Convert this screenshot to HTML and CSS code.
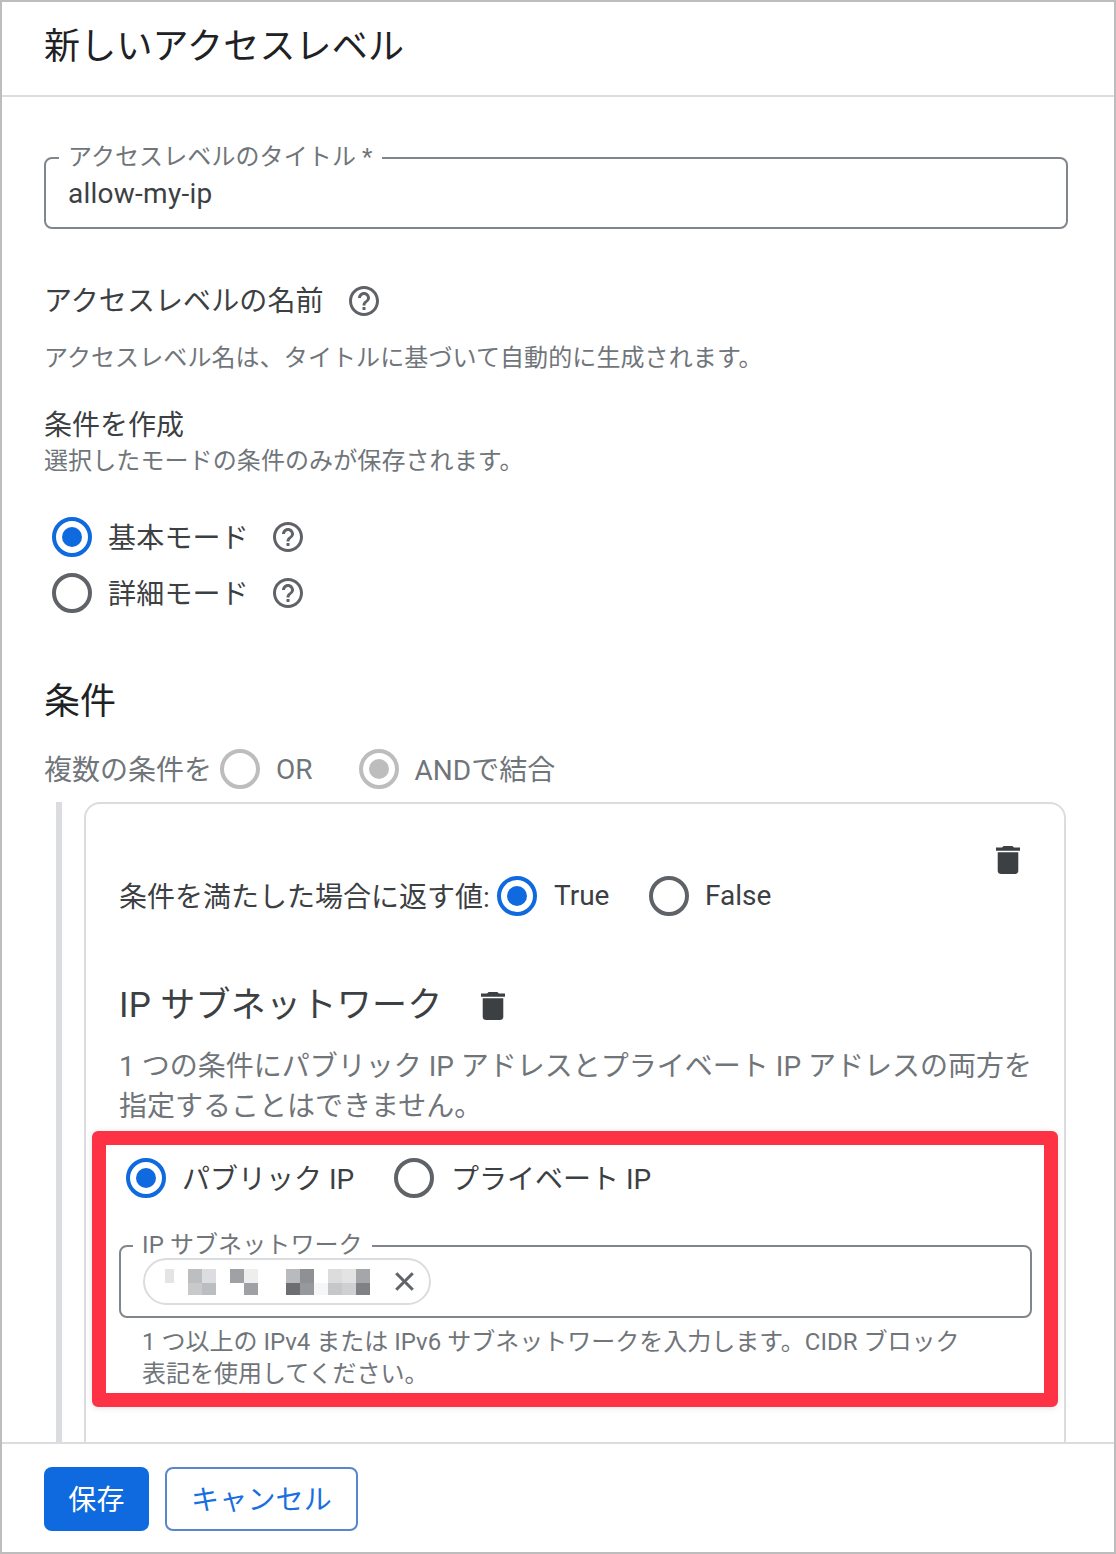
FILE: index.html
```html
<!DOCTYPE html>
<html lang="ja">
<head>
<meta charset="utf-8">
<title>新しいアクセスレベル</title>
<link rel="stylesheet" href="styles.css">
</head>
<body>
<svg class="defs" width="0" height="0" aria-hidden="true">
  <symbol id="help" viewBox="0 0 24 24"><path d="M11 18h2v-2h-2v2zm1-16C6.48 2 2 6.48 2 12s4.48 10 10 10 10-4.48 10-10S17.52 2 12 2zm0 18c-4.41 0-8-3.59-8-8s3.59-8 8-8 8 3.59 8 8-3.59 8-8 8zm0-14c-2.21 0-4 1.79-4 4h2c0-1.1.9-2 2-2s2 .9 2 2c0 2-3 1.75-3 5h2c0-2.25 3-2.5 3-5 0-2.21-1.79-4-4-4z"/></symbol>
  <symbol id="trash" viewBox="5 3 14 18" preserveAspectRatio="none"><path d="M6 19c0 1.1.9 2 2 2h8c1.1 0 2-.9 2-2V7H6v12zM19 4h-3.5l-1-1h-5l-1 1H5v2h14V4z"/></symbol>
</svg>
<div class="page">
  <header class="top"><h1 class="title">新しいアクセスレベル</h1></header>
  <main class="content">
    <fieldset class="field title-field">
      <legend class="legend">アクセスレベルのタイトル *</legend>
      <div class="value">allow-my-ip</div>
    </fieldset>

    <div class="name-row"><span class="name-label">アクセスレベルの名前</span><svg class="help help-name"><use href="#help"/></svg></div>
    <p class="muted name-desc">アクセスレベル名は、タイトルに基づいて自動的に生成されます。</p>

    <div class="create-title">条件を作成</div>
    <p class="muted create-desc">選択したモードの条件のみが保存されます。</p>

    <div class="modes">
      <div class="mode"><span class="radio on"></span><span class="mode-label">基本モード</span><svg class="help"><use href="#help"/></svg></div>
      <div class="mode"><span class="radio"></span><span class="mode-label">詳細モード</span><svg class="help"><use href="#help"/></svg></div>
    </div>

    <h2 class="section-title">条件</h2>
    <div class="combine">
      <span class="combine-label">複数の条件を</span>
      <span class="radio disabled combine-or"></span><span class="combine-text">OR</span>
      <span class="radio disabled on combine-and"></span><span class="combine-text combine-text-and">ANDで結合</span>
    </div>

    <section class="group">
      <div class="card">
        <div class="card-actions"><svg class="trash"><use href="#trash"/></svg></div>
        <div class="return-row">
          <span class="return-label">条件を満たした場合に返す値:</span>
          <span class="radio on"></span><span class="return-true">True</span>
          <span class="radio return-radio"></span><span class="return-false">False</span>
        </div>
        <div class="subnet-head"><h3 class="subnet-title">IP サブネットワーク</h3><svg class="trash subnet-trash"><use href="#trash"/></svg></div>
        <p class="subnet-desc">1 つの条件にパブリック IP アドレスとプライベート IP アドレスの両方を指定することはできません。</p>

        <div class="highlight">
          <div class="ip-types">
            <span class="radio on"></span><span class="ip-public">パブリック IP</span>
            <span class="radio"></span><span class="ip-private">プライベート IP</span>
          </div>
          <fieldset class="field subnet-field">
            <legend class="legend">IP サブネットワーク</legend>
            <div class="chip">
              <svg class="mosaic" width="205" height="26" viewBox="0 0 205 26" shape-rendering="crispEdges" aria-hidden="true">
                <rect x="0" y="0" width="9" height="14" fill="#e4e4e5"/>
                <rect x="23" y="0" width="14" height="14" fill="#bdbec0"/><rect x="23" y="14" width="14" height="12" fill="#c8c9cb"/>
                <rect x="37" y="0" width="14" height="14" fill="#dcdde0"/><rect x="37" y="14" width="14" height="12" fill="#bcbdc0"/>
                <rect x="65" y="0" width="14" height="14" fill="#a0a1a4"/>
                <rect x="79" y="0" width="14" height="14" fill="#eeeeef"/><rect x="79" y="14" width="14" height="12" fill="#9fa0a3"/>
                <rect x="121" y="0" width="14" height="14" fill="#b9babd"/><rect x="121" y="14" width="14" height="12" fill="#6c6e73"/>
                <rect x="135" y="0" width="14" height="14" fill="#8f9094"/><rect x="135" y="14" width="14" height="12" fill="#97989b"/>
                <rect x="149" y="14" width="14" height="12" fill="#f6f6f6"/>
                <rect x="163" y="0" width="14" height="14" fill="#dcdcdd"/><rect x="163" y="14" width="14" height="12" fill="#c6c7c9"/>
                <rect x="177" y="0" width="14" height="14" fill="#e3e3e4"/><rect x="177" y="14" width="14" height="12" fill="#cfd0d1"/>
                <rect x="191" y="0" width="14" height="14" fill="#a5a6a9"/><rect x="191" y="14" width="14" height="12" fill="#7f8185"/>
              </svg>
              <svg class="chip-close" viewBox="0 0 24 24" aria-hidden="true"><path d="M19 6.41L17.59 5 12 10.59 6.41 5 5 6.41 10.59 12 5 17.59 6.41 19 12 13.41 17.59 19 19 17.59 13.41 12z"/></svg>
            </div>
          </fieldset>
          <p class="helper">1 つ以上の IPv4 または IPv6 サブネットワークを入力します。CIDR ブロック表記を使用してください。</p>
        </div>
      </div>
    </section>
  </main>
  <footer class="bottom">
    <button class="btn primary" type="button">保存</button>
    <button class="btn outline" type="button">キャンセル</button>
  </footer>
</div>
</body>
</html>
```
FILE: styles.css
```css
* { box-sizing: border-box; }
html, body { margin: 0; padding: 0; height: 100%; overflow: hidden; background: #fff; }
body {
  font-family: Roboto, "Noto Sans CJK JP", sans-serif;
  font-size: 28px;
  color: #3c4043;
}
.defs { position: absolute; }
.page {
  width: 1116px;
  height: 1554px;
  border: 2px solid #bdbdbd;
  display: flex;
  flex-direction: column;
  background: #fff;
}
.top {
  height: 95px;
  flex: none;
  border-bottom: 2px solid #dadce0;
  padding: 0 42px;
  display: flex;
  align-items: center;
}
.title { margin: 0 0 4px; font-size: 36px; font-weight: 400; line-height: 48px; letter-spacing: 0.2px; color: #202124; }
.content {
  flex: 1;
  min-height: 0;
  overflow: hidden;
  padding: 0 46px 0 42px;
}
.field {
  margin: 0;
  min-width: 0;
  border: 2px solid #80868b;
  border-radius: 8px;
}
.legend {
  padding: 1px 9px 3px;
  font-size: 24px;
  line-height: 24px;
  letter-spacing: 0.1px;
  color: #70757a;
}
.title-field { margin-top: 47px; padding: 0 22px 9px; }
.title-field .legend { margin-left: -9px; }
.value { margin-top: -2px; font-size: 28px; line-height: 48px; letter-spacing: 0.25px; color: #3c4043; }

.name-row { margin-top: 52px; height: 40px; display: flex; align-items: center; line-height: 40px; color: #3c4043; }
.name-label { padding-top: 2px; letter-spacing: 0.1px; }
.help { width: 36px; height: 36px; fill: #5f6368; flex: none; }
.help-name { margin-left: 22px; }
.muted { margin: 0; font-size: 24px; line-height: 32px; letter-spacing: 0.1px; color: #70757a; }
.name-desc { margin-top: 21px; }
.create-title { margin-top: 34px; line-height: 36px; }
.create-desc { margin-top: 1px; }

.radio {
  width: 40px;
  height: 40px;
  flex: none;
  border: 4px solid #5f6368;
  border-radius: 50%;
  display: flex;
  align-items: center;
  justify-content: center;
}
.radio.on { border-color: #0f69df; }
.radio.on::after {
  content: "";
  width: 20px;
  height: 20px;
  border-radius: 50%;
  background: #0f69df;
}
.radio.disabled { border-color: #bdbdbd; }
.radio.disabled.on::after { background: #bdbdbd; }

.modes { margin-top: 32px; padding-left: 8px; }
.mode { height: 56px; display: flex; align-items: center; }
.mode-label { margin: 0 0 2px 16px; width: 162px; letter-spacing: 0.2px; }

.section-title { margin: 57px 0 0; font-size: 36px; font-weight: 400; line-height: 48px; color: #202124; }
.combine { margin-top: 21px; height: 44px; display: flex; align-items: center; color: #70757a; }
.combine-label { width: 176px; padding-bottom: 2px; }
.combine-text { margin-left: 16px; }
.combine-text-and { padding-bottom: 2px; }
.combine-and { margin-left: 46px; }

.group {
  margin: 11px 0 0 12px;
  border-left: 6px solid #dadce0;
  padding-left: 22px;
  height: 700px;
}
.card {
  margin-right: 2px;
  height: 700px;
  border: 2px solid #dadce0;
  border-radius: 16px;
  padding: 42px 32px 0 33px;
}
.card-actions { display: flex; justify-content: flex-end; padding-right: 12px; height: 28px; }
.trash { width: 24px; height: 28px; fill: #3c4043; flex: none; }
.return-row { margin-top: 2px; height: 40px; display: flex; align-items: center; }
.return-label { width: 378px; white-space: nowrap; padding-bottom: 2px; }
.return-true { margin-left: 17px; width: 95px; padding-bottom: 2px; }
.return-false { margin-left: 16px; padding-bottom: 2px; }
.subnet-head { margin-top: 64px; height: 48px; display: flex; align-items: center; }
.subnet-title { margin: 0; padding-top: 4px; font-size: 35px; font-weight: 400; line-height: 48px; letter-spacing: 0.3px; color: #3c4043; }
.subnet-trash { margin: 4px 0 0 38px; }
.subnet-desc { margin: 19px 0 0; line-height: 40px; color: #70757a; width: 925px; }

.highlight {
  margin: 4px 0 0 -27px;
  width: 966px;
  height: 276px;
  border: 14px solid #fd3345;
  border-radius: 6px;
  box-shadow: 0 1px 6px rgba(60, 64, 67, 0.15);
  padding: 13px 0 0 13px;
}
.ip-types { margin-left: 7px; height: 40px; display: flex; align-items: center; }
.ip-public { margin: 0 0 2px 16px; width: 212px; }
.ip-private { margin: 0 0 2px 17px; }

.subnet-field { margin-top: 34px; width: 913px; padding: 0 22px 11px; }
.subnet-field .legend { margin-left: -10px; }
.chip {
  margin-top: -2px;
  width: 288px;
  height: 47px;
  border: 2px solid #dadce0;
  border-radius: 24px;
  display: flex;
  align-items: center;
  padding-left: 20px;
  overflow: hidden;
}
.mosaic { flex: none; }
.chip-close { width: 31px; height: 31px; margin-left: 19px; fill: #5f6368; stroke: #5f6368; stroke-width: 0.4; flex: none; }
.helper { margin: 8px 0 0 23px; width: 830px; font-size: 24px; line-height: 32px; color: #70757a; }

.bottom {
  height: 110px;
  flex: none;
  border-top: 2px solid #dadce0;
  padding: 23px 0 0 42px;
  display: flex;
  gap: 16px;
  align-items: flex-start;
  background: #fff;
}
.btn {
  height: 64px;
  border-radius: 8px;
  font-family: inherit;
  font-size: 28px;
  letter-spacing: 0.2px;
  padding: 0 0 3px;
}
.primary { width: 105px; background: #0f69df; border: none; color: #fff; }
.outline { width: 193px; background: #fff; border: 2px solid #5a86cb; color: #1a6fe0; }
```
